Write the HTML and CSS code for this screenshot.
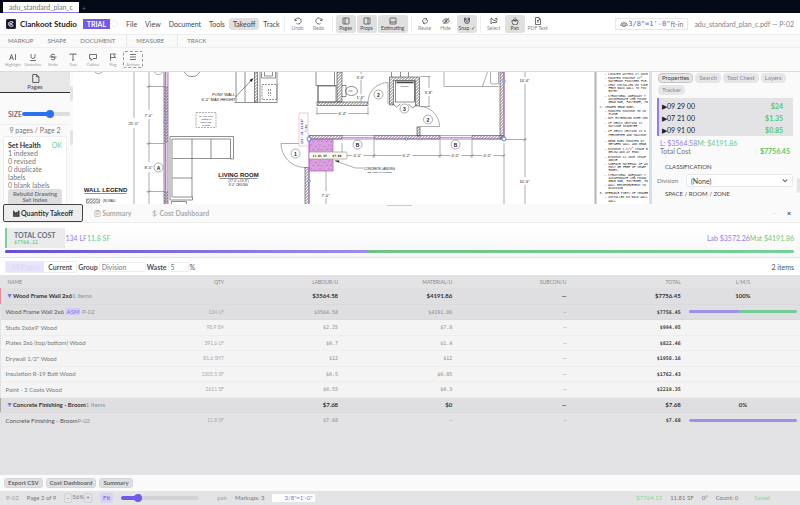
FILE: index.html
```html
<!DOCTYPE html>
<html lang="en">
<head>
  <meta charset="UTF-8">
  <meta name="viewport" content="width=device-width, initial-scale=1.0">
  <title>Clankoot Studio</title>
  <link rel="stylesheet" href="styles.css">
</head>
<body>
  <div class="doc-tabs">
    <button class="doc-tab">adu_standard_plan_c</button>
    <button class="doc-add" aria-label="New tab">+</button>
  </div>

  <header class="header">
    <svg class="logo" viewBox="0 0 20 20"><rect width="20" height="20" rx="4" fill="#15132f"/><path d="M15 7C13 4 6 4 5 9s4 7 9 5M8 7v6M8 10l6-3M9 10l6 3" fill="none" stroke="#fff" stroke-width="1.7"/></svg>
    <h1 class="brand">Clankoot Studio</h1>
    <span class="trial">TRIAL</span>
    <span class="dot"></span>
    <nav class="menu">
      <button>File</button>
      <button>View</button>
      <button>Document</button>
      <button>Tools</button>
      <button class="active">Takeoff</button>
      <button>Track</button>
    </nav>
    <div class="tools">
      <button><svg viewBox="0 0 16 16"><path d="M2 3v4h4M2.500 7A6 6 0 1 1 5 13"/></svg>Undo</button>
      <button><svg viewBox="0 0 16 16"><path d="M14 3v4h-4M13.500 7A6 6 0 1 0 11 13"/></svg>Redo</button>
    </div>
    <div class="tools">
      <button class="active"><svg viewBox="0 0 16 16"><rect x="2" y="2" width="12" height="12" rx="1"/><path d="M6 2v12"/></svg>Pages</button>
      <button class="active"><svg viewBox="0 0 16 16"><rect x="2" y="2" width="12" height="12" rx="1"/><path d="M10 2v12"/></svg>Props</button>
      <button class="active wide"><svg viewBox="0 0 16 16"><rect x="2" y="2" width="12" height="12" rx="1"/><path d="M2 10h12"/></svg>Estimating</button>
    </div>
    <div class="tools">
      <button><svg viewBox="0 0 16 16"><path d="M3 10a5.500 5.500 0 0 1 8-6M13 6a5.500 5.500 0 0 1-8 6M9 2l3 2-2 3M7 14l-3-2 2-3"/></svg>Reuse</button>
      <button><svg viewBox="0 0 16 16"><path d="M1 8q7-9 14 0q-7 9-14 0zM3 14L14 2"/><circle cx="8" cy="8" r="2"/></svg>Hide</button>
      <button class="active"><svg viewBox="0 0 16 16"><path d="M3 2v6a5 5 0 0 0 10 0V2h-3v6a2 2 0 0 1-4 0V2zM3 5h3M10 5h3"/></svg>Snap ✓</button>
    </div>
    <div class="tools">
      <button><svg viewBox="0 0 16 16"><path d="M2 2v12l3-3h8V8L8 7zM9 4l5-1v4"/></svg>Select</button>
      <button class="active"><svg viewBox="0 0 16 16"><path d="M2 7h12v3a5 5 0 0 1-12 0zM5 7V4M8 10V1M11 7V4"/></svg>Pan</button>
      <button><svg viewBox="0 0 16 16"><path d="M3 1h7l3 4v10H3zM10 1v4h3M6 7h4M8 7v5"/></svg>PDF Text</button>
    </div>
    <div class="scale"><svg viewBox="0 0 16 16"><path d="M8 3v10M3 6h10M1 11l2.500-5L6 11zM10 11l2.500-5 2.500 5zM5 13h6"/></svg><b>3/8"=1'-0"</b>ft-in</div>
    <span class="filename">adu_standard_plan_c.pdf — P-02</span>
  </header>

  <nav class="categories">
    <button>MARKUP</button>
    <button>SHAPE</button>
    <button>DOCUMENT</button>
    <button class="split">MEASURE</button>
    <button class="split">TRACK</button>
  </nav>

  <div class="ribbon">
    <button><svg viewBox="0 0 16 16"><path d="M1 14L5 3l4 11M2 10h6M13 2v12"/></svg>Highlight</button>
    <button><svg viewBox="0 0 16 16"><path d="M4 2v5a4 4 0 0 0 8 0V2M2 15h12"/></svg>Underline</button>
    <button><svg viewBox="0 0 16 16"><path d="M12 4q-4-4-8 0q-1 3 4 4q5 1 4 4q-4 4-8 0M1 8h14"/></svg>Strike</button>
    <button><svg viewBox="0 0 16 16"><path d="M2 4V2h12v2M8 2v12M6 14h4"/></svg>Text</button>
    <button><svg viewBox="0 0 16 16"><path d="M1 3h14v8H8l-4 4v-4H1z"/></svg>Callout</button>
    <button><svg viewBox="0 0 16 16"><path d="M3 15V2h10l-3 3.500L13 9H3"/></svg>Flag</button>
    <button class="dashed"><svg viewBox="0 0 16 16"><path d="M2 3h12M2 8h12M2 13h12"/></svg>Actions</button>
  </div>

  <main class="workspace">
    <aside class="pages">
      <button class="pages-tab"><svg viewBox="0 0 16 16"><path d="M3 1h7l4 4v10H3zM10 1v4h4"/></svg>Pages</button>
      <div class="size-row">
        <label for="thumbSize">SIZE</label>
        <input type="range" id="thumbSize" value="50">
      </div>
      <div class="page-count">9 pages / Page 2</div>
      <div class="health">
        <div class="health-title"><b>Set Health</b><span>OK</span></div>
        <div>1 indexed</div>
        <div>0 revised</div>
        <div>0 duplicate<br>labels</div>
        <div>0 blank labels</div>
        <button>Rebuild Drawing Set Index</button>
      </div>
      <i class="thumb top"></i>
      <i class="thumb mid"></i>
    </aside>

    <section class="canvas">
      <svg class="plan" viewBox="73 72 577 132" preserveAspectRatio="xMidYMid slice">
        <defs>
          <pattern id="hatch" width="3" height="3" patternUnits="userSpaceOnUse"><path d="M0 3L3 0" stroke="#333" stroke-width=".7"/></pattern>
          <pattern id="speck" width="9" height="8" patternUnits="userSpaceOnUse"><rect width="9" height="8" fill="#dba0e0"/><path d="M1 2l1 1M5 1l1 0M7 5l1 1M3 6l1-1M4 4h.6M8 2h.5" stroke="#8f4b9e" stroke-width=".7"/></pattern>
        </defs>

        <!-- dimensions and grid on the left -->
        <g class="thin">
          <path d="M134.500 72v46M134.500 128v76M149.500 72v38M149.500 119v43M149.500 172v32M147 86.500h18M147 143.500h18M147 191.500h18M148 88l3-3M148 145l3-3M148 193l3-3"/>
          <circle cx="99" cy="68" r="5.500"/><circle cx="159" cy="70" r="4.500"/><circle cx="159" cy="167.500" r="4.500"/>
        </g>
        <text x="134" y="125" class="dim">25'-0"</text>
        <text x="149" y="117" class="dim">7'-0"</text>
        <text x="149" y="169" class="dim">8'-0"</text>
        <text x="159" y="169.500" class="mark">A</text>
        <text x="106" y="192" class="room">WALL LEGEND</text>
        <path d="M85 193.500h42" class="line"/>
        <rect x="87" y="199" width="13" height="4" fill="url(#hatch)" class="thin"/>
        <text x="110" y="202" class="tiny">(N) WALL</text>

        <!-- left wall -->
        <rect x="165" y="72" width="3" height="132" fill="#ead3f0"/>
        <rect x="164.500" y="86" width="4" height="57" fill="url(#hatch)"/>
        <rect x="164.500" y="191" width="4" height="13" fill="url(#hatch)"/>
        <path d="M164.500 72v132M168.500 72v132" class="line"/>
        <path d="M166 72v132" class="markup"/>

        <!-- sofa -->
        <g class="line">
          <path d="M170.500 200V136.500H234v22.500h-3V139H172.500v58H193v3zM192.500 139v58M173 158.500h58M211.500 139v19.500M173 178h19.500M172 204v-2.500h15v2.500"/>
          <path d="M185 72a8 7 0 0 0 15 0"/>
        </g>
        <rect x="196.500" y="112.500" width="20" height="15" class="thin dash"/>
        <text x="206.500" y="117" class="tiny faint">30" x 30" ATTIC</text>
        <text x="206.500" y="120" class="tiny faint">ACCESS W/</text>
        <text x="206.500" y="123" class="tiny faint">INSULATED</text>
        <text x="206.500" y="126" class="tiny faint">GASKET</text>
        <text x="239" y="177" class="room">LIVING ROOM</text>
        <path d="M220 178.500h38" class="line"/>
        <text x="239" y="182" class="tiny">(17'-0" x 10'-8")</text>
        <text x="239" y="186" class="tiny">8'-0" CEILING</text>

        <!-- kitchen -->
        <text x="224" y="96" class="dim">PONY WALL</text>
        <text x="219" y="101" class="dim">6'-0" MAX HEIGHT</text>
        <path d="M236 97l17-18" class="line"/><path d="M254 78l-4 2 2 2z"/>
        <rect x="255" y="72" width="3" height="30" fill="url(#hatch)" class="line"/>
        <path d="M236.500 72v30M245.500 72v30M260.500 72v30M277.500 72v30M235 102.500h43M262 72v6h14v-6M265 72v4h8v-4" class="line"/>
        <rect x="262.500" y="84.500" width="15" height="15" class="line dash"/>
        <path d="M269 89v7M271 89v7" class="line dash"/>

        <!-- bathroom -->
        <path d="M316.500 72v13M316 85.500h21M318.500 85.500v17M342.500 85.500h4v11h-4M335 72v13" class="line"/>
        <rect x="318.500" y="86" width="18" height="16" class="line"/>
        <ellipse cx="352" cy="91" rx="6" ry="4.500" class="line"/><path d="M349 91h4" class="line"/>
        <rect x="337.500" y="72" width="5" height="30" fill="url(#hatch)" class="line"/>
        <rect x="317.500" y="102" width="51" height="3.500" fill="url(#hatch)" class="line"/>
        <path d="M361.500 72v2M361.500 80v14M361.500 99v3M317.500 107v8M368.500 107v8M317 113.500h21M349 113.500h20" class="thin"/>
        <text x="361" y="79" class="dim">3'-6"</text>
        <text x="361" y="99" class="dim">1'-6"</text>
        <text x="343" y="115" class="dim">6'-4"</text>
        <path d="M368.500 102A20 20 0 0 1 388.500 82.500V104" class="thin"/>
        <circle cx="379" cy="94.500" r="4.500" class="thin"/><text x="379" y="96.500" class="mark">2</text>

        <!-- closet -->
        <g class="line">
          <path d="M390 105V77h30v29h-4V80.500h-22V105zM397 81.500h18v20h-18z" fill="url(#hatch)" fill-rule="evenodd"/>
          <rect x="396" y="81" width="19" height="21" fill="#fff"/>
          <path d="M397 82.500h17" stroke-width="1.500"/>
          <path d="M392 72v5M401 72v5M409 72v5M392 103l5 4 4-3M409 104l4 4 4-3"/>
        </g>
        <text x="405" y="87" class="tiny faint">CLOSET</text>
        <circle cx="405" cy="108.500" r="4.500" class="thin white"/><text x="405" y="110.500" class="mark">3</text>
        <path d="M429.500 76v12M429.500 96v10M421 76.500h10M421 106.500h10" class="thin"/>
        <text x="429" y="94" class="dim">3'-8"</text>
        <path d="M420 106.500A20 20 0 0 1 440 126.500H420" class="thin"/>
        <circle cx="428.500" cy="119.500" r="4.500" class="thin white"/><text x="428.500" y="121.500" class="mark">2</text>
        <rect x="417.500" y="127" width="3" height="9" fill="url(#hatch)" class="line"/>

        <!-- bedroom -->
        <path d="M444.500 72v14.500H499M483 86.500l5-14.500M491 72v10q0 2 2 2h6V72" class="thin"/>

        <!-- outer walls -->
        <g class="line" fill="url(#hatch)">
          <rect x="500.500" y="72" width="4" height="67"/>
          <rect x="309.500" y="135.500" width="33" height="3.500"/>
          <rect x="374.500" y="135.500" width="66" height="3.500"/>
          <rect x="472.500" y="135.500" width="32" height="3.500"/>
          <rect x="305.500" y="167.500" width="4" height="37"/>
        </g>
        <path d="M342 135.500h32M342 137.500h32M440 135.500h32M440 137.500h32" class="thin"/>
        <rect x="310" y="139.500" width="23.500" height="31.500" fill="url(#speck)" stroke="#a95fb4" stroke-width=".7"/>
        <path d="M309.500 204V139h195V72" class="markup"/>

        <!-- dimensions below the wall -->
        <path d="M342.500 143v10M374.500 140v18M440.500 140v18M472.500 140v18M504.500 143v61M525.500 72v5M525.500 84v93M525.500 185v19M506 139.500h21M346 155.500h7M364 155.500h38M413 155.500h38M462 155.500h21M494 155.500h11M373 157l3-3M439 157l3-3M471 157l3-3M503 157l3-3M524 141l3-3M326.500 171v20M326.500 198v6" class="thin"/>
        <text x="358" y="157" class="dim">4'-0"</text>
        <text x="407" y="157" class="dim">6'-2"</text>
        <text x="456" y="157" class="dim">4'-0"</text>
        <text x="488" y="157" class="dim">4'-0"</text>
        <text x="525" y="82" class="dim">14'-6"</text>
        <text x="525" y="183" class="dim">10'-6"</text>
        <text x="326" y="197" class="dim">7'-0"</text>
        <circle cx="358" cy="144.500" r="4.500" class="thin white"/><text x="358" y="146.500" class="mark">B</text>
        <circle cx="456" cy="144.500" r="4.500" class="thin white"/><text x="456" y="146.500" class="mark">B</text>

        <!-- entry door and landing -->
        <path d="M306 143.500H281.500A24 24 0 0 0 305.500 167.500" class="thin"/>
        <circle cx="296" cy="153.500" r="4.500" class="thin"/><text x="296" y="155.500" class="mark">1</text>
        <path d="M336 161l20 7h8" class="thin"/><path d="M335 160.500l5 0-1 2z"/>
        <text x="380" y="170" class="tiny">CONCRETE LANDING</text>
        <text x="380" y="173" class="tiny faint">SEE FLOOR PLAN NOTES</text>

        <!-- takeoff labels -->
        <rect x="299.500" y="113" width="9" height="33" fill="#fff" stroke="#f0b3c0" stroke-width=".7"/>
        <text transform="translate(303 144) rotate(-90)" class="tag blue">133'-11 13/16"</text>
        <text transform="translate(307 132) rotate(-90)" class="tag blue">7.8W</text>
        <rect x="309.500" y="152" width="38" height="7" rx="1.500" fill="#fbfbf4" stroke="#888" stroke-width=".6"/>
        <text x="313" y="157" class="tag">11.81 SF · $7.68</text>
        <g class="handle">
          <circle cx="309.500" cy="139" r="2"/><circle cx="504.500" cy="139" r="2"/>
          <circle cx="407" cy="139" r="1.200"/><circle cx="504.500" cy="81" r="1.200"/><circle cx="309.500" cy="181" r="1.200"/><circle cx="165.500" cy="122" r="1.200"/>
        </g>

        <!-- general notes -->
        <path d="M595.500 72v132M596.500 72v132" class="thin"/>
        <g class="notes">
          <text x="605" y="75">– LOCATED WITHIN 27 INCH</text>
          <text x="605" y="79">– MOUNTED MINIMUM 17"</text>
          <text x="609" y="82">BATHROOM FINISHED FLR.</text>
          <text x="605" y="86">– SEAT INSTALLED ON SIDE</text>
          <text x="609" y="89">FROM BACK WALL TO POI</text>
          <text x="609" y="92">ENTRY</text>
          <text x="605" y="97">– STRUCTURAL ADEQUACY T</text>
          <text x="609" y="100">ACCOMMODATE 250 POUND</text>
          <text x="609" y="103">GRAB BAR, FASTENER, MO</text>
          <text x="600" y="108">2. SHOWER GRAB BARS</text>
          <text x="605" y="112">– MOUNTED MINIMUM 33 IN</text>
          <text x="609" y="115">FLOOR</text>
          <text x="605" y="119">– NOT EXTENDING OVER SHO</text>
          <text x="605" y="124">– IF CROSS SECTION IS</text>
          <text x="609" y="127">OUTSIDE DIAMETER</text>
          <text x="605" y="132">– IF CROSS SECTION IS N</text>
          <text x="609" y="136">PERIMETER AND MAXIMUM</text>
          <text x="605" y="142">– GRAB BARS MOUNTED AT</text>
          <text x="609" y="145">BETWEEN WALL AND GRAB</text>
          <text x="605" y="150">– MINIMUM 1-1/2" SPACE B</text>
          <text x="609" y="153">BELOW AND AT ENDS</text>
          <text x="605" y="158">– MINIMUM 12 INCH SPACE</text>
          <text x="609" y="161">ABOVE</text>
          <text x="605" y="165">– SURFACE MATERIAL OF AN</text>
          <text x="609" y="168">MUST BE FREE OF SHARP</text>
          <text x="609" y="171">EDGES.</text>
          <text x="605" y="176">– STRUCTURAL ADEQUACY T</text>
          <text x="609" y="179">ACCOMMODATE 250 POUND</text>
          <text x="609" y="182">GRAB BAR, FASTENER, MO</text>
          <text x="605" y="186">– WALL REINFORCEMENT TO</text>
          <text x="609" y="189">BLOCKING</text>
          <text x="600" y="194">3. OPERABLE PARTS OF SHOWER</text>
          <text x="605" y="198">– INSTALLED ON BACK WALL</text>
          <text x="609" y="202">WALL</text>
        </g>
      </svg>
    </section>

    <aside class="props">
      <div class="chips">
        <button class="active">Properties</button>
        <button>Search</button>
        <button>Tool Chest</button>
        <button>Layers</button>
        <button>Tracker</button>
      </div>
      <div class="codes">
        <div><span>▶09 29 00</span><b>$24</b></div>
        <div><span>▶07 21 00</span><b>$1.35</b></div>
        <div><span>▶09 91 00</span><b>$0.85</b></div>
      </div>
      <div class="split-cost"><span class="lab">L: $3564.58</span><span class="mat">M: $4191.86</span></div>
      <div class="total-cost"><span>Total Cost</span><b>$7756.45</b></div>
      <h2>CLASSIFICATION</h2>
      <div class="field">
        <label for="division">Division</label>
        <div class="select-box">
          <select id="division"><option>(None)</option></select>
          <svg viewBox="0 0 8 8"><path d="M1 2l3 3 3-3"/></svg>
        </div>
      </div>
      <h2>SPACE / ROOM / ZONE</h2>
      <i class="thumb low"></i>
    </aside>
  </main>

  <section class="dock">
    <div class="dock-tabs">
      <button class="active"><svg viewBox="0 0 16 16"><path d="M1 1v14h14M4 14V8h2v6M8 14V5h2v9M12 14V2h2v12" fill="currentColor"/></svg>Quantity Takeoff</button>
      <button><svg viewBox="0 0 16 16"><rect x="2" y="2" width="12" height="13" rx="1"/><path d="M5 1h6v3H5zM5 8h6M5 11h6"/></svg>Summary</button>
      <button><svg viewBox="0 0 16 16"><path d="M13 5q-5-4-9-1q-1 3 4 4q6 1 4 4q-4 3-9-1M8 0v16"/></svg>Cost Dashboard</button>
      <i class="grip"></i>
      <button class="min" aria-label="Minimise">–</button>
      <button class="close" aria-label="Close">×</button>
    </div>

    <div class="summary">
      <div class="summary-line">
        <div class="total-box">
          <div class="total-label">TOTAL COST</div>
          <div class="total-value">$7764.12</div>
        </div>
        <span class="lab">134 LF</span><span class="mat">11.8 SF</span>
        <span class="lab push">Lab $3572.26</span><span class="mat">Mat $4191.86</span>
      </div>
      <div class="bar"><i style="width: 46%"></i></div>
    </div>

    <div class="filters">
      <div class="segment"><button class="active">All Pages</button><button>Current</button></div>
      <label for="group">Group</label>
      <select id="group"><option>Division</option></select>
      <label for="waste">Waste</label>
      <input type="text" id="waste" value="5">
      <span>%</span>
      <span class="push">2 items</span>
    </div>

    <div class="table-wrap">
      <table>
        <thead>
          <tr><th>NAME</th><th>QTY</th><th>LABOUR/U</th><th>MATERIAL/U</th><th>SUBCON/U</th><th>TOTAL</th><th>L/M/S</th></tr>
        </thead>
        <tbody>
          <tr class="group red"><td><i>▼</i>Wood Frame Wall 2x6<span>1 items</span></td><td></td><td>$3564.58</td><td>$4191.86</td><td>—</td><td>$7756.45</td><td>100%</td></tr>
          <tr class="item"><td>Wood Frame Wall 2x6 <em>ASM</em> <span>P-02</span></td><td>134 LF</td><td>$3564.58</td><td>$4191.86</td><td>–</td><td>$7756.45</td><td><div class="mini"><i style="width: 46%"></i></div></td></tr>
          <tr><td>Studs 2x6x9' Wood</td><td>98.9 EA</td><td>$2.25</td><td>$7.8</td><td>–</td><td>$994.05</td><td></td></tr>
          <tr><td>Plates 2x6 (top/bottom) Wood</td><td>391.6 LF</td><td>$0.7</td><td>$1.4</td><td>–</td><td>$822.46</td><td></td></tr>
          <tr><td>Drywall 1/2" Wood</td><td>81.6 SHT</td><td>$12</td><td>$12</td><td>–</td><td>$1958.16</td><td></td></tr>
          <tr><td>Insulation R-19 Batt Wood</td><td>1305.5 SF</td><td>$0.5</td><td>$0.85</td><td>–</td><td>$1762.43</td><td></td></tr>
          <tr><td>Paint - 2 Coats Wood</td><td>2611 SF</td><td>$0.55</td><td>$0.3</td><td>–</td><td>$2219.35</td><td></td></tr>
          <tr class="group"><td><i>▼</i>Concrete Finishing - Broom<span>1 items</span></td><td></td><td>$7.68</td><td>$0</td><td>—</td><td>$7.68</td><td>0%</td></tr>
          <tr class="item"><td>Concrete Finishing - Broom<span>P-02</span></td><td>11.8 SF</td><td>$7.68</td><td>–</td><td>–</td><td>$7.68</td><td><div class="mini"><i style="width: 100%"></i></div></td></tr>
        </tbody>
      </table>
    </div>

    <div class="actions">
      <button>Export CSV</button>
      <button>Cost Dashboard</button>
      <button>Summary</button>
    </div>
  </section>

  <footer class="status">
    <span class="muted">P-02</span>
    <span>Page 2 of 9</span>
    <div class="zoom"><button>−</button><span>56%</span><button>+</button></div>
    <button class="fit">Fit</button>
    <input type="range" class="zoom-range" value="18" aria-label="Zoom">
    <span class="muted">pan</span>
    <span>Markups: 3</span>
    <span class="scale-box">3/8"=1'-0"</span>
    <span class="ok push">$7764.12</span>
    <span>11.81 SF</span>
    <span>0°</span>
    <span>Count: 0</span>
    <span class="ok saved">Saved</span>
  </footer>
</body>
</html>
```
FILE: styles.css
```css
* {
  margin: 0;
  padding: 0;
  box-sizing: border-box;
}

body {
  height: 100vh;
  display: flex;
  flex-direction: column;
  overflow: hidden;
  background: #fafafa;
  color: #44464c;
  font-family: Lato, "Noto Sans", sans-serif;
  font-size: 7px;
  line-height: 8px;
}

button,
input,
select {
  font: inherit;
  color: inherit;
  background: none;
  border: none;
  appearance: none;
  white-space: nowrap;
}

svg {
  fill: none;
  stroke: currentColor;
  stroke-width: 1.5;
  flex-shrink: 0;
}

.push {
  margin-left: auto;
}

.lab {
  color: #9181ee;
}

.mat {
  color: #6ccb88;
}

/* document tabs */
.doc-tabs {
  display: flex;
  flex: 0 0 13px;
  padding: 2px 3px 0;
  background: #040a16;
}

.doc-tab {
  padding: 0 6px;
  background: #fff;
  border-bottom: 1px solid #8a78f0;
  color: #777;
}

.doc-add {
  padding: 0 3px;
  color: #667;
}

/* header */
.header {
  display: flex;
  align-items: center;
  flex: 0 0 22px;
  padding: 0 6px;
  background: #fff;
  border-bottom: 1px solid #eee;
}

.logo {
  width: 10px;
  height: 10px;
}

.brand {
  margin: 0 6px 0 4px;
  font-size: 8px;
  font-weight: 700;
  color: #222;
  white-space: nowrap;
}

.trial {
  padding: 1px 4px;
  background: #7259f0;
  color: #fff;
  font-weight: 700;
}

.dot {
  width: 7px;
  height: 7px;
  margin: 0 4px 0 1px;
  border: 1px solid #eee;
  border-radius: 50%;
}

.menu {
  display: flex;
}

.menu button {
  padding: 2px 4px;
  border-radius: 3px;
}

.active {
  background: #e0e0e0;
}

.tools {
  display: flex;
  gap: 1px;
  padding: 0 3px;
  border-left: 1px solid #eee;
}

.tools button {
  display: flex;
  flex-direction: column;
  align-items: center;
  min-width: 20px;
  padding: 2px;
  border-radius: 3px;
  font-size: 5px;
  line-height: 6px;
  color: #888;
}

.tools button.active {
  color: #444;
}

.tools .wide {
  min-width: 30px;
}

.tools svg {
  width: 8px;
  height: 8px;
  color: #444;
}

.scale {
  display: flex;
  align-items: center;
  margin: 0 5px 0 auto;
  padding: 1px 4px;
  border: 1px solid #e8e8e8;
  color: #777;
  white-space: nowrap;
}

.scale b {
  font: 7px "DejaVu Sans Mono", monospace;
  color: #6a55e0;
}

.scale svg {
  width: 8px;
  height: 8px;
}

.filename {
  padding-left: 1px;
  color: #7c828c;
  white-space: nowrap;
}

.categories {
  display: flex;
  flex: 0 0 12px;
  padding-left: 1px;
}

.categories button {
  padding: 0 7px;
  font-size: 6px;
  color: #777;
}

.categories .split {
  margin-left: 4px;
  padding: 0 9px;
  border-left: 1px solid #e8e8e8;
}

.ribbon {
  display: flex;
  flex: 0 0 25px;
  padding: 3px;
  border-top: 1px solid #f0f0f0;
  border-bottom: 1px solid #d5dfe2;
}

.ribbon button {
  display: flex;
  flex-direction: column;
  align-items: center;
  justify-content: center;
  gap: 1px;
  width: 20px;
  font-size: 4px;
  line-height: 5px;
  color: #999;
}

.ribbon svg {
  width: 8px;
  height: 8px;
  color: #444;
}

.ribbon .dashed {
  border: 1px dashed #999;
  border-radius: 2px;
}

/* workspace */
.workspace {
  display: flex;
  flex: 132 1 0;
  min-height: 0;
}

.pages {
  position: relative;
  flex: 0 0 73px;
  padding-right: 3px;
  overflow: hidden;
}

.pages-tab {
  display: flex;
  flex-direction: column;
  align-items: center;
  width: 100%;
  padding: 2px 0;
  background: #e7e7e7;
  border-bottom: 1px solid #333;
  font-size: 6px;
  line-height: 7px;
}

.pages-tab svg {
  width: 9px;
  height: 9px;
}

.size-row {
  display: flex;
  align-items: center;
  height: 32px;
  padding: 10px 0 0 8px;
  border-bottom: 1px solid #eee;
  overflow: hidden;
}

.size-row input {
  flex-shrink: 0;
  width: 56px;
  height: 8px;
}

input[type="range"]::-webkit-slider-runnable-track {
  height: 4px;
  border-radius: 2px;
  background: linear-gradient(90deg, #2a72f0 50%, #ddd 50%);
}

input[type="range"]::-webkit-slider-thumb {
  appearance: none;
  width: 8px;
  height: 8px;
  margin-top: -2px;
  border-radius: 50%;
  background: #2a72f0;
}

.page-count {
  padding: 1px 0 2px;
  text-align: center;
  color: #777;
}

.health {
  margin: 0 3px;
  padding: 4px;
  border: 1px solid #eee;
  border-radius: 2px;
  background: #fff;
  color: #777;
}

.health-title {
  display: flex;
  justify-content: space-between;
  color: #333;
}

.health-title span {
  color: #6fce82;
}

.health button {
  width: 100%;
  padding: 2px 4px;
  border-radius: 3px;
  background: #dedee0;
  font-size: 6px;
  line-height: 6px;
  font-weight: 700;
  color: #777;
  white-space: normal;
}

.thumb {
  position: absolute;
  right: 0;
  width: 3px;
  height: 15px;
  border-radius: 2px;
  background: #e4e4e4;
}

.thumb.top {
  top: 14px;
}

.thumb.mid {
  top: 58px;
}

.thumb.low {
  top: 106px;
}

.canvas {
  flex: 1;
  min-width: 0;
  overflow: hidden;
  background: #fff;
}

.plan {
  display: block;
  width: 100%;
  height: 100%;
  fill: #222;
  stroke: none;
  font-family: "Liberation Sans", Arial, sans-serif;
}

.plan .thin,
.plan .line {
  stroke: #777;
  stroke-width: 0.6;
}

.plan .line {
  stroke: #444;
}

.plan .thin:not([fill]),
.plan .line:not([fill]),
.plan .thin *:not([fill]),
.plan .line *:not([fill]) {
  fill: none;
}

.plan g.line[fill] * {
  fill: url(#hatch);
}

.plan .white:not([fill]) {
  fill: #fff;
}

.plan .dash {
  stroke-dasharray: 2 1;
}

.plan .markup {
  fill: none;
  stroke: #b876cc;
  stroke-width: 1.2;
}

.plan .dim {
  font-size: 4px;
  text-anchor: middle;
}

.plan .tiny {
  font-size: 3px;
  text-anchor: middle;
}

.plan .faint {
  font-size: 2px;
}

.plan .mark {
  font-size: 5px;
  font-weight: 700;
  text-anchor: middle;
}

.plan .room {
  font-size: 6px;
  font-weight: 700;
  text-anchor: middle;
}

.plan .tag {
  font: 700 3px "DejaVu Sans Mono", monospace;
}

.plan .blue {
  fill: #3a3ac0;
}

.plan .handle {
  fill: #fff;
  stroke: #3d7be0;
  stroke-width: 0.9;
}

.plan .notes {
  font-family: "Liberation Mono", monospace;
  font-size: 3px;
}

.props {
  position: relative;
  flex: 0 0 151px;
  padding: 1px 7px 0 5px;
  border-left: 3px solid #d3e2e8;
  overflow: hidden;
}

.chips {
  display: flex;
  flex-wrap: wrap;
  gap: 2px;
  padding: 0 0 3px 1px;
}

.chips button {
  padding: 0 3px;
  border: 1px solid #e6e6e8;
  border-radius: 4px;
  background: #e6e6e8;
  font-size: 6px;
  color: #888;
}

.chips .active {
  border-color: #c4c4c6;
  color: #444;
}

.codes {
  padding: 2px 10px 0 3px;
  border-left: 2px solid #8d80ee;
  background: #e3e3e5;
}

.codes div {
  display: flex;
  justify-content: space-between;
  line-height: 12px;
}

.codes b,
.total-cost b {
  color: #55c865;
}

.codes span {
  color: #222;
}

.split-cost {
  padding: 3px 3px 0;
}

.total-cost {
  display: flex;
  justify-content: space-between;
  padding: 0 3px 8px;
  color: #777;
}

.props h2 {
  padding: 0 8px;
  font-size: 6px;
  font-weight: 400;
}

.field {
  display: flex;
  align-items: center;
  margin: 3px 0;
  font-size: 6px;
  color: #777;
}

.field label {
  flex: 0 0 29px;
}

.select-box {
  display: flex;
  align-items: center;
  flex: 1;
  padding: 0 4px;
  border: 1px solid #e8e8ea;
  border-radius: 3px;
  background: #fff;
}

.select-box select {
  flex: 1;
  height: 11px;
  font-size: 7px;
  color: #444;
}

.select-box svg {
  width: 6px;
  height: 6px;
}

/* estimating dock */
.dock {
  display: flex;
  flex-direction: column;
  flex: 287 1 0;
  min-height: 0;
}

.dock-tabs {
  position: relative;
  display: flex;
  align-items: center;
  flex: 0 0 19px;
  padding: 0 3px;
  border-bottom: 1px solid #eee;
  font-weight: 700;
  color: #aaa;
}

.dock-tabs button {
  display: flex;
  align-items: center;
  gap: 1px;
  height: 18px;
  padding: 0 10px;
}

.dock-tabs .active {
  margin-right: 1px;
  padding: 0 9px;
  background: #ededed;
  border: 1px solid #444;
  border-radius: 2px;
  color: #333;
}

.dock-tabs svg {
  width: 7px;
  height: 7px;
}

.grip {
  position: absolute;
  top: 1px;
  left: 50%;
  width: 25px;
  height: 1px;
  margin-left: -13px;
  background: #ccc;
}

.dock-tabs .min {
  margin-left: auto;
  padding: 0 5px;
  color: #ddd;
}

.dock-tabs .close {
  padding: 0 6px;
  color: #444;
}

.summary {
  padding: 5px 6px 4px 5px;
  background: linear-gradient(#fff, #f7f7f7);
  border-bottom: 1px solid #e4e4e6;
}

.summary-line {
  display: flex;
  align-items: center;
}

.total-box {
  padding: 3px 10px 3px 7px;
  border-left: 2px solid #7ccf98;
  background: #ebebed;
}

.total-label {
  font-weight: 700;
  color: #66707f;
}

.total-value {
  font: 700 5px/6px "DejaVu Sans Mono", monospace;
  color: #6fd08c;
}

.bar {
  height: 3px;
  margin-top: 2px;
  border-radius: 2px;
  background: linear-gradient(90deg, #6bb874, #74d09a);
  overflow: hidden;
}

.bar i {
  display: block;
  height: 100%;
  background: linear-gradient(90deg, #654fd6, #a08de8);
}

.filters {
  display: flex;
  align-items: center;
  padding: 3px 6px 2px 5px;
  background: #fff;
  color: #4d5360;
}

.segment {
  display: flex;
  margin-right: 1px;
  border: 1px solid #eee;
}

.segment button {
  padding: 1px 4px;
}

.segment .active {
  padding: 1px 5px;
  background: #e9e4fb;
  color: #dfd8f8;
}

.filters label,
.segment button {
  font-weight: 700;
}

.filters select,
.filters input {
  width: 47px;
  height: 10px;
  margin: 0 1px;
  padding: 0 2px;
  border: 1px solid #eee;
  border-radius: 2px;
  color: #777;
}

.filters input {
  width: 21px;
}

/* table */
.table-wrap {
  flex: 1;
  min-height: 0;
  background: #e3e3e5;
  overflow: hidden;
}

table {
  width: 100%;
  table-layout: fixed;
  border-collapse: collapse;
}

th,
td {
  height: 16px;
  padding: 0 5px;
  border-bottom: 1px solid #eee;
  text-align: right;
  white-space: nowrap;
  font: 5px/6px "DejaVu Sans Mono", monospace;
  color: #888;
}

tr:nth-child(even) td {
  height: 15px;
}

th {
  height: 13px;
  border: none;
  font: 5px/6px Lato, sans-serif;
}

th:first-child {
  padding-left: 7px;
}

th:first-child,
td:first-child {
  text-align: left;
}

td:first-child {
  font: 6px/7px Lato, sans-serif;
  color: #777;
}

th:last-child,
td:last-child {
  text-align: center;
}

td:last-child {
  padding: 0 3px;
}

td:nth-child(2) {
  font: 5px/6px Lato, sans-serif;
  color: #aaa;
}

td:nth-child(6) {
  font-weight: 700;
  color: #444;
}

tbody tr {
  background: #f4f4f5;
}

tr.group,
tr.item {
  background: #dfdfe1;
}

tr.group td,
tr.item td {
  border-color: #dadadc;
}

tr.group td {
  font: 700 6px/7px Lato, sans-serif;
  color: #333;
}

tr.group td:first-child {
  border-left: 1px solid #aaa;
}

tr.group.red td:first-child {
  border-left-color: #e08a96;
}

td i {
  font-size: 7px;
  font-style: normal;
  color: #8070ee;
}

td span {
  font-weight: 400;
  color: #8791a3;
}

tr.item:last-child,
tr.item:last-child td {
  background: #e3e3e5;
  border-color: #e3e3e5;
}

tr.item td:first-child {
  color: #555;
}

td em {
  padding: 0 1px;
  background: #d3cdf2;
  font-style: normal;
  color: #8070ee;
}

.mini {
  height: 3px;
  border-radius: 2px;
  background: #76cb96;
  overflow: hidden;
}

.mini i {
  display: block;
  height: 100%;
  background: #a18fe8;
}

.actions {
  display: flex;
  gap: 3px;
  flex: 0 0 16px;
  padding: 3px 4px;
}

.actions button {
  padding: 0 3px;
  border: 1px solid #d6d6d9;
  border-radius: 3px;
  background: #dfdfe2;
  font-size: 6px;
  font-weight: 700;
  color: #666;
}

/* status bar */
.status {
  display: flex;
  align-items: center;
  gap: 8px;
  flex: 0 0 14px;
  padding: 0 6px;
  background: #e4e4e6;
  font-size: 6px;
  color: #777;
  white-space: nowrap;
}

.muted {
  color: #9aa0aa;
}

.zoom {
  display: flex;
}

.zoom button {
  width: 8px;
  border: 1px solid #d2d2d5;
  border-radius: 2px;
}

.fit {
  padding: 1px 3px;
  border-radius: 2px;
  background: #d8d3f3;
  color: #8070ee;
  font-weight: 700;
}

.zoom-range {
  width: 78px;
  height: 8px;
  margin-right: 10px;
}

.zoom-range::-webkit-slider-runnable-track {
  background: linear-gradient(90deg, #7159ec 20%, #d3d3d6 20%) !important;
}

.zoom-range::-webkit-slider-thumb {
  background: #7159ec !important;
}

.scale-box {
  padding: 0 0 0 12px;
  width: 43px;
  background: #fff;
  color: #8070ee;
}

.ok {
  color: #7ddb8e;
}

.saved {
  margin: 0 24px 0 8px;
}
```
